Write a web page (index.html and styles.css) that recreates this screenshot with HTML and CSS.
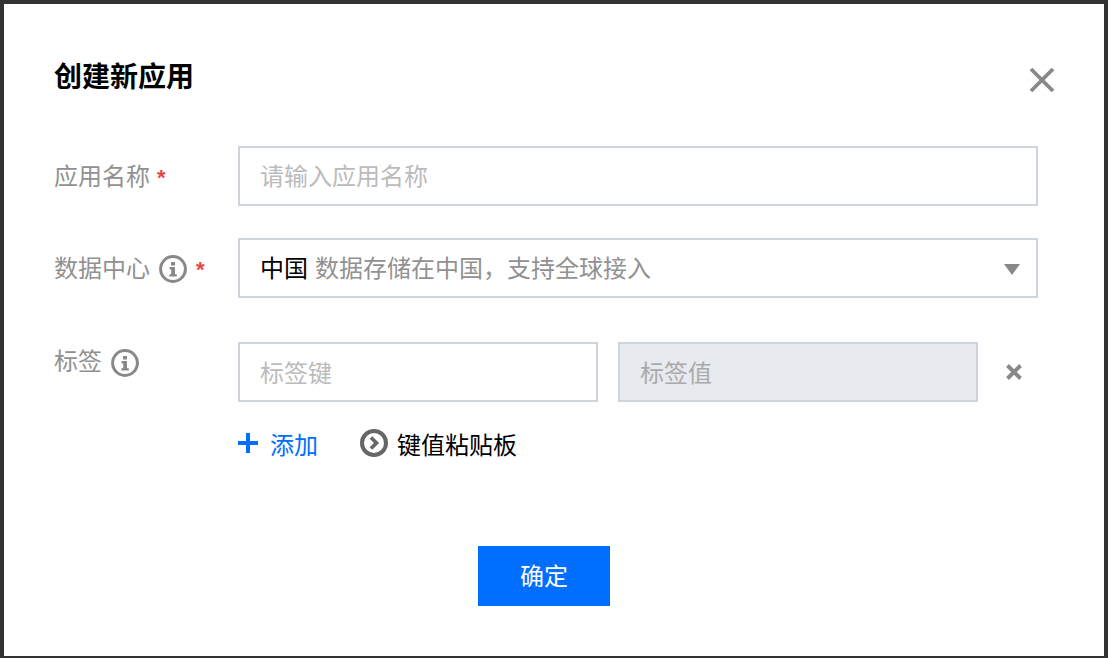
FILE: index.html
```html
<!DOCTYPE html>
<html lang="zh-CN">
<head>
<meta charset="utf-8">
<title>创建新应用</title>
<link rel="stylesheet" href="styles.css">
</head>
<body>
<div class="dialog">
  <header class="head">
    <h1 class="title">创建新应用</h1>
    <button class="close" type="button" aria-label="关闭">
      <svg width="26" height="26" viewBox="0 0 26 26"><path d="M2 2 L24 24 M24 2 L2 24" stroke="#888" stroke-width="3.8" fill="none"/></svg>
    </button>
  </header>
  <div class="form">
    <div class="row">
      <div class="label"><span class="label-text">应用名称</span><span class="req">*</span></div>
      <div class="field input wide"><span class="ph">请输入应用名称</span></div>
    </div>
    <div class="row">
      <div class="label"><span class="label-text">数据中心</span>
        <svg class="info" viewBox="0 0 28 28"><circle cx="14" cy="14" r="12.4" fill="none" stroke="#888" stroke-width="3"/><path d="M12 7h4v3.4h-4z M10.6 12h5.4v7.2h1.8v2.4h-7.4v-2.4h1.8v-4.8h-1.6z" fill="#888"/></svg>
        <span class="req after-icon">*</span></div>
      <div class="field input wide select">
        <span class="strong">中国</span><span class="hint">数据存储在中国，支持全球接入</span>
        <svg class="caret" width="16" height="11" viewBox="0 0 16 11"><path d="M0 0H16L8 11Z" fill="#888"/></svg>
      </div>
    </div>
    <div class="row tags">
      <div class="label label-top"><span class="label-text">标签</span>
        <svg class="info" viewBox="0 0 28 28"><circle cx="14" cy="14" r="12.4" fill="none" stroke="#888" stroke-width="3"/><path d="M12 7h4v3.4h-4z M10.6 12h5.4v7.2h1.8v2.4h-7.4v-2.4h1.8v-4.8h-1.6z" fill="#888"/></svg>
      </div>
      <div class="tag-col">
        <div class="tag-row">
          <div class="field input half"><span class="ph">标签键</span></div>
          <div class="field input half disabled"><span class="ph dim">标签值</span></div>
          <svg class="del" width="16" height="16" viewBox="0 0 16 16"><path d="M1.5 1.5 L14.5 14.5 M14.5 1.5 L1.5 14.5" stroke="#888" stroke-width="4" fill="none"/></svg>
        </div>
        <div class="actions">
          <a class="add"><svg width="20" height="20" viewBox="0 0 20 20"><path d="M8 0h4v8h8v4h-8v8H8v-8H0V8h8z" fill="#006eff"/></svg><span class="act-text">添加</span></a>
          <a class="paste"><svg width="28" height="28" viewBox="0 0 28 28"><circle cx="14" cy="14" r="12" fill="none" stroke="#666" stroke-width="4"/><path d="M11 8.5 L16.5 14 L11 19.5" fill="none" stroke="#666" stroke-width="3.6"/></svg><span class="act-text">键值粘贴板</span></a>
        </div>
      </div>
    </div>
  </div>
  <footer class="foot"><button class="ok" type="button">确定</button></footer>
</div>
</body>
</html>
```

FILE: styles.css
```css
* { box-sizing: border-box; }
html, body { margin: 0; padding: 0; height: 100%; background: #fff; }
body { font-family: "Noto Sans CJK SC", "Noto Sans", sans-serif; font-size: 24px; overflow: hidden; }
.dialog {
  width: 1108px; height: 658px;
  border: solid #333; border-width: 4px 4px 2px;
  padding: 0 0 0 50px;
  background: #fff;
}
.head { display: flex; justify-content: space-between; align-items: flex-start; height: 142px; padding: 51px 49px 0 0; }
.title { margin: 0; font-size: 28px; line-height: 40px; font-weight: 700; color: #000; }
.close { border: 0; background: none; padding: 0; margin-top: 12px; width: 26px; height: 26px; display: block; }
.close svg { display: block; }
.form { display: flex; flex-direction: column; gap: 32px; }
.row { display: flex; align-items: center; }
.row.tags { align-items: flex-start; margin-top: 12px; }
.label { width: 184px; display: flex; align-items: center; color: #919191; line-height: 36px; flex: none; }
.label-text { padding-bottom: 2px; }
.req { color: #e54545; font-family: "Liberation Sans", sans-serif; font-weight: 700; font-size: 22px; line-height: 24px; margin-left: 7px; height: 24px; margin-top: 4px; }
.req.after-icon { margin-left: 9px; }
.info { width: 28px; height: 28px; margin-left: 9px; margin-top: 2px; flex: none; }
.label-top .info { margin-top: 4px; }
.field { height: 60px; border: 2px solid #cfd5de; display: flex; align-items: center; padding: 0 20px 2px 21px; background: #fff; line-height: 36px; }
.ph, .strong { margin-left: -1px; }
.half { padding-bottom: 0; }
.wide { width: 800px; }
.half { width: 360px; }
.ph { color: #bbb; }
.ph.dim { color: #aaa; }
.disabled { background: #e7eaef; }
.strong { color: #000; margin-right: 8px; }
.hint { margin-left: -1px; color: #919191; }
.caret { margin-left: auto; margin-right: -4px; margin-top: 4px; }
.tag-col { display: flex; flex-direction: column; }
.tag-row { display: flex; align-items: center; gap: 20px; }
.del { margin-left: 8px; }
.actions { display: flex; align-items: center; gap: 42px; margin-top: 22px; line-height: 36px; }
.add, .paste { display: flex; align-items: center; }
.add { color: #006eff; gap: 12px; }
.paste { color: #000; gap: 9px; }
.act-text { margin-top: 2px; }
.foot { display: flex; justify-content: center; padding-right: 70px; margin-top: 84px; }
.ok { width: 132px; height: 60px; border: 0; background: #006eff; color: #fff; font: inherit; padding: 0 0 3px; }
```
